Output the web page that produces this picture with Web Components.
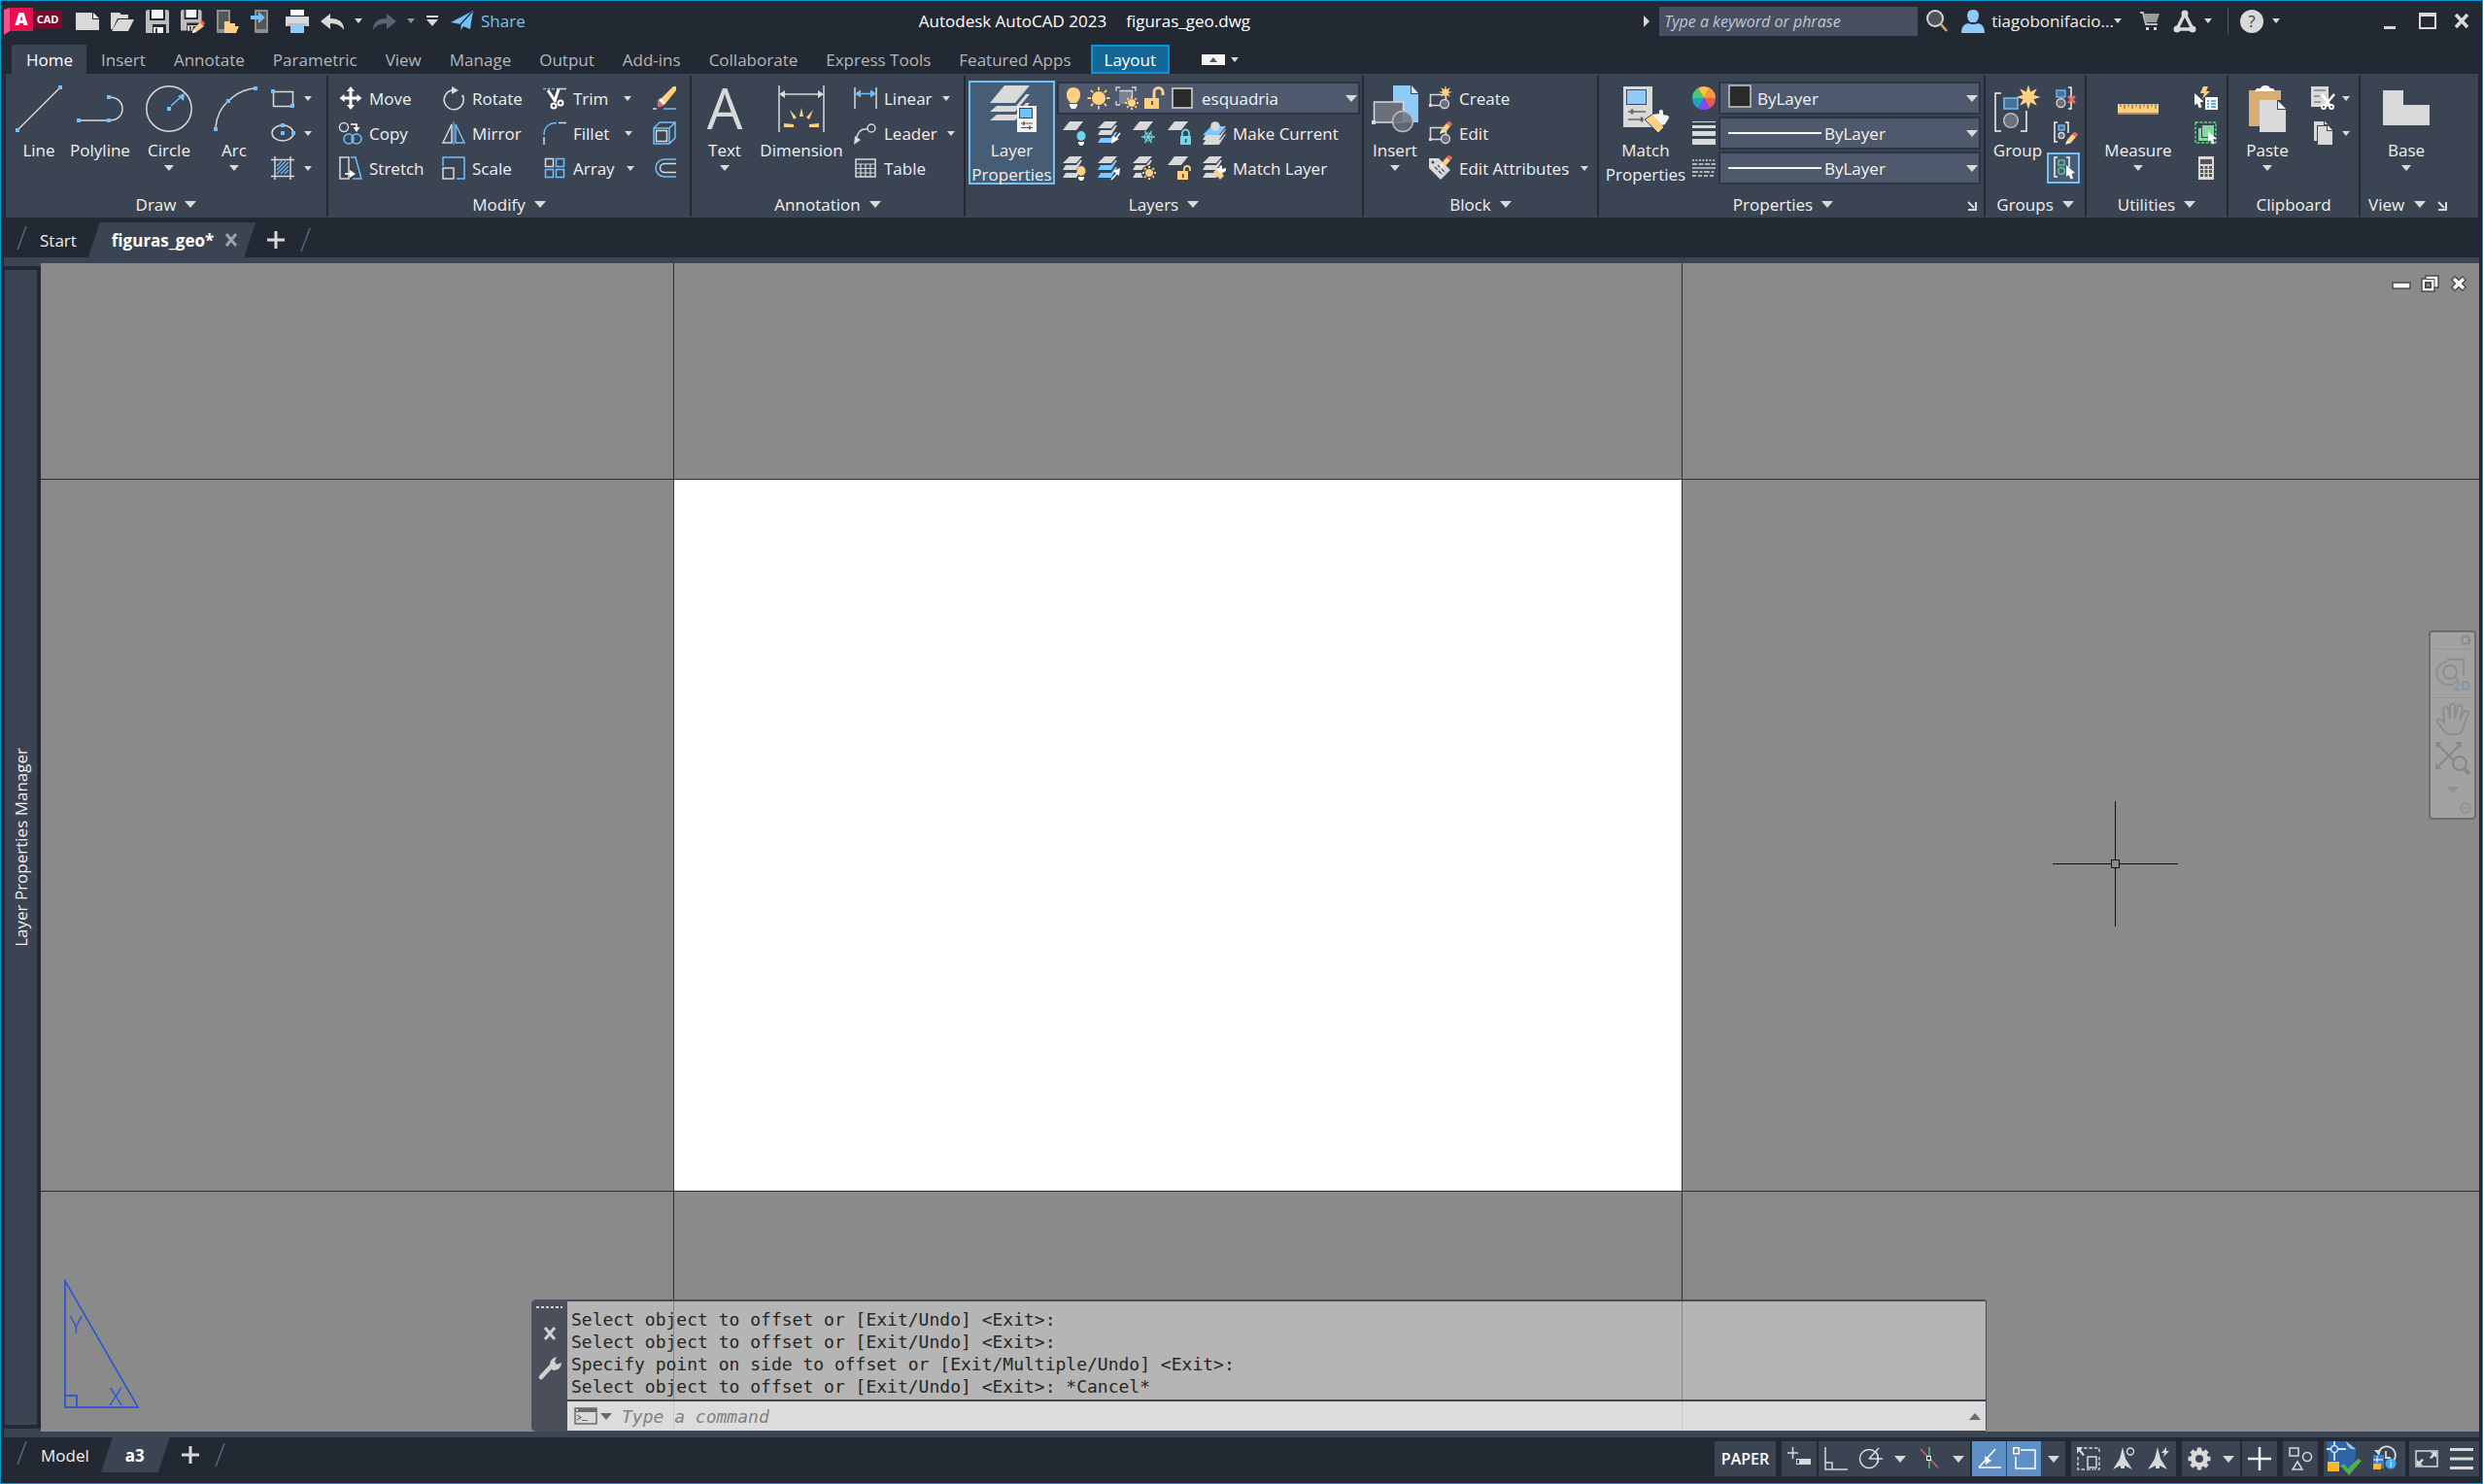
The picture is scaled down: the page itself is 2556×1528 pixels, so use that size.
<!DOCTYPE html>
<html lang="en">
<head>
<meta charset="utf-8">
<title>Autodesk AutoCAD 2023 - figuras_geo.dwg</title>
<style>
html,body{height:100%;margin:0;background:#222933}
body{font-family:"Open Sans","Noto Sans",sans-serif;font-size:17px;color:#f0f0f0}
</style>
</head>
<body>
<cad-app></cad-app>
<script>
const G='#d9d9d9',B='#6fc0fb',Y='#fed080',R='#f16464',D='#3b4453';
const sq=(x,y,s=4)=>`<rect x="${x-s/2}" y="${y-s/2}" width="${s}" height="${s}" fill="${B}"/>`;
const ln=(d,c=G,w=1.5,x='')=>`<path d="${d}" fill="none" stroke="${c}" stroke-width="${w}" ${x}/>`;
const fl=(d,c=G,x='')=>`<path d="${d}" fill="${c}" ${x}/>`;
const pencil=(x,y)=>`<g transform="translate(${x} ${y})">${fl('M0 13l2-5 3 3z','#fff')}${fl('M2 8l5-6 4 3-6 7z',Y)}${fl('M7 2l2-2q3 0 4 3l-2 2z',R)}</g>`;
const sheet=(y,c=G)=>fl(`M7 ${y}h14l-7 9H0z`,c);
const stack=(c2=G,c3=G)=>fl('M7 0h13l-6 7H0z')+fl('M14 9l4-5h2l-6 10H0l3-5z',c2)+fl('M14 17l4-6h2l-6 11H0l3-5z',c3);
const ray=(cx,cy,r1,r2,n,c,w)=>{let d='';for(let i=0;i<n;i++){const a=i*2*Math.PI/n;d+=`M${(cx+r1*Math.cos(a)).toFixed(1)} ${(cy+r1*Math.sin(a)).toFixed(1)}L${(cx+r2*Math.cos(a)).toFixed(1)} ${(cy+r2*Math.sin(a)).toFixed(1)}`}return ln(d,c,w)};
const star=(cx,cy,ro,ri,n,c)=>{let d='';for(let i=0;i<n*2;i++){const r=i%2?ri:ro,a=i*Math.PI/n-Math.PI/2;d+=(i?'L':'M')+(cx+r*Math.cos(a)).toFixed(1)+' '+(cy+r*Math.sin(a)).toFixed(1)}return fl(d+'z',c)};
const cursor=(x,y,s=1)=>`<path transform="translate(${x} ${y}) scale(${s})" d="M0 0v13l3-2 2 5 3-1-2-5 4-1z" fill="#fff"/>`;
const sunSmall=(x,y)=>ray(x,y,5,7,8,Y,2)+`<circle cx="${x}" cy="${y}" r="4" fill="${Y}"/>`;
const bulb=(x,y,c)=>`<ellipse cx="${x}" cy="${y}" rx="4.5" ry="5" fill="${c}"/>`+fl(`M${x-3} ${y+6}h6v2l-2 2h-2l-2-2z`,'#fff');
const floppy=fl('M3 0h1v11h16V0h1q3 0 3 2v22H21V15H7v9H0V2Q0 0 3 0z','#bdbdbd')+fl('M6 0h12v9H6z','#f4f4f4')+fl('M8 18h10v6H8z','#f4f4f4')+fl('M10 19h2v5h-2z',D);
const I={
down:[10,6,fl('M0 0h10L5 6z')],
downs:[8,5,fl('M0 0h8L4 5z')],
downl:[12,7,fl('M0 0h12L6 7z')],
launch:[10,10,ln('M1 1l6 6M9 1v8H1','#d9d9d9',2)],
logo:[60,28,fl('M0 2L6 0V24L0 28z','#f25287')+fl('M6 0h24v24H6z','#e51050')+fl('M30 3h30v18H30z','#7b0a2b')+`<text x="18" y="18" font-size="18" font-weight="800" fill="#fff" text-anchor="middle">A</text><text x="45" y="16" font-size="11" font-weight="700" fill="#fff" text-anchor="middle">CAD</text>`],
new:[24,24,fl('M0 3h17v7h7v11H0z')+fl('M18 3l6 6h-6z','#f4f4f4')],
open:[24,24,fl('M0 3h9l2 2h7v4H7L2 20H0z')+fl('M8 10h16l-6 12H1z')],
save:[24,24,floppy],
saveas:[24,24,`<g transform="scale(.9 .9)">${floppy}</g>`+fl('M13 17h11v7H11z','#222933')+fl('M12 24l1-4 7-7 4 4-8 6z',Y)+fl('M20 13l2-2 3 3-2 3z',R)+fl('M12 24l1-4 3 3z','#fff')],
openweb:[24,24,fl('M1 0h13q1 0 1 1v22q0 1-1 1H2q-1 0-1-1z','#8e8e8e')+fl('M3 2h10v18H3z','#555')+fl('M9 12h5l1 2h5v3h4l-3 7H9z',Y)],
saveweb:[24,24,fl('M5 0h12q1 0 1 1v22q0 1-1 1H5q-1 0-1-1V1q0-1 1-1z','#8e8e8e')+fl('M6 2h10v18H6z','#555')+fl('M0 6h8V2l7 6-7 6v-4H0z',B)],
print:[24,24,fl('M5 0h14v6H5z','#fff')+fl('M0 7h24v10h-4v-3H4v3H0z')+fl('M2 17h20v-3H2z','#bcbcbc')+fl('M5 16h14v8H5z','#8fcbfa')],
undo:[24,18,fl('M0 9L10 1v5q14 0 14 12-4-7-14-7v6z')],
redo:[24,18,fl('M24 9L14 1v5Q0 6 0 18q4-7 14-7v6z','#5b6470')],
cust:[12,12,fl('M0 0h12v2H0zM0 4h12l-6 7z')],
share:[24,22,fl('M0 12L23 0 20 19l-7-3-3 5v-7z',B)+ln('M22 1L10 14v7','#222933',1.2)],
play:[6,12,fl('M0 0l6 6-6 6z')],
mag:[24,24,`<circle cx="10" cy="9" r="8" fill="#4f545b" stroke="${G}" stroke-width="2"/>`+ln('M16 15l6 7','#d9a866',2.5)],
user:[24,24,fl('M12 0q6 0 6 6 0 4-3 7H9q-3-3-3-7 0-6 6-6z','#8fcbfa')+fl('M0 24q0-9 7-10 5 2 10 0 7 1 7 10z','#8fcbfa')],
cart:[20,20,ln('M0 1h3l3 12h12','#bdbdbd',2)+fl('M4 2h16l-3 9H6z','#9b9b9b')+fl('M6 16h3v3H6zM14 16h3v3h-3z')],
adsk:[24,24,ln('M12 4L4 20M12 4l8 16M4 20h16',G,3.5)+`<circle cx="12" cy="4" r="3.5" fill="${G}"/><circle cx="4" cy="20" r="3.5" fill="${G}"/><circle cx="20" cy="20" r="3.5" fill="${G}"/>`],
help:[24,24,`<circle cx="12" cy="12" r="12" fill="${G}"/><text x="12" y="18" font-size="17" text-anchor="middle" fill="#333b46">?</text>`],
min:[12,3,fl('M0 0h12v3H0z')],
max:[18,17,ln('M1 2h16v14H1z',G,2)+fl('M0 0h18v4H0z')],
close:[16,15,ln('M2 1l12 13M14 1L2 14',G,3.5)],
tabmin:[24,11,fl('M0 0h24v11H0z','#f4f4f4')+fl('M8 8l4-5 4 5z','#555')],
line:[48,48,ln('M2 46L46 2')+sq(2,46)+sq(46,2)],
pline:[48,48,ln('M2 36h31M33 12c9 0 14 5 14 12s-5 12-14 12')+sq(2,36)+sq(33,12)+sq(33,36)],
circle:[48,48,`<circle cx="24" cy="24" r="23.2" fill="none" stroke="${G}" stroke-width="1.5"/>`+sq(24,24)+ln('M26 21L35 13',B)+fl('M40 8l-1 8-6-5z',B)],
arc:[48,48,ln('M5 43C6 32 10 23 18 16C26 8 34 4 45 3')+sq(5,45)+sq(18,16)+sq(46,3)],
rect:[24,24,ln('M2.5 5.5h20v15h-20z')+sq(2,5)+sq(22,20)],
ellipse:[24,24,`<ellipse cx="12" cy="12" rx="11" ry="8" fill="none" stroke="${G}" stroke-width="1.5"/>`+sq(12,4)+sq(12,12)+sq(23,12)],
hatch:[24,24,ln('M0 3.5h24M0 20.5h24M4 0v24M20 0v24')+ln('M6 10l5-5M6 14l9-9M6 18L18 6M10 18l8-8M14 18l4-4',B,1.3)],
move:[24,24,fl('M12 0l4 5h-2.5v5.500h5V8l5 4-5 4v-2.500h-5v5.500H16l-4 5-4-5h2.500v-5.500h-5V16L.5 12l5-4v2.500h5V5H8z','#fff')],
rotate:[24,24,ln('M10 4A10 10 0 1 0 21 9')+ln('M22 11l-1-2',G,2)+fl('M10 0l7 4-7 4z')],
trim:[24,24,ln('M0 2.500h12',B,1.5,'stroke-dasharray="3 1.500"')+ln('M14 2.500h10')+ln('M5 4l8 12M16 3l-4 12','#fff',3)+`<circle cx="11" cy="20" r="2.500" fill="none" stroke="#fff" stroke-width="2"/><circle cx="18" cy="17" r="2.500" fill="none" stroke="#fff" stroke-width="2"/>`],
copy:[24,24,`<circle cx="5" cy="6" r="4.500" fill="none" stroke="${G}" stroke-width="1.500"/><circle cx="10" cy="18" r="5" fill="none" stroke="${B}" stroke-width="1.500"/><circle cx="18" cy="18" r="5" fill="none" stroke="${B}" stroke-width="1.500"/>`+ln('M12 3h6v4','#fff')+fl('M14.500 6h7L18 11z','#fff')],
mirror:[24,24,ln('M10 3v19H1z')+ln('M14 3v19h9z',B)+ln('M12 0v24',B,1)],
fillet:[24,24,ln('M1 24v-8')+ln('M1 14C1 6 6 1.500 14 1.500',B)+ln('M16 1.500h8')],
stretch:[24,24,ln('M1 1h9v22H1z')+ln('M12 1h5l6 22h-9',B)+ln('M6 18h7','#fff')+fl('M11 14l6 4-6 4z','#fff')],
scale:[24,24,ln('M1 10V1h22v22H15',B)+ln('M1 12h11v11H1z')],
array:[24,24,ln('M2.500 2.500h8v8h-8z')+ln('M13.500 2.500h8v8h-8zM2.500 13.500h8v8h-8zM13.500 13.500h8v8h-8z',B)],
erase:[24,24,fl('M21 0h3v4L12 19l-6-4z',Y)+fl('M8 12l5 5-3 3-5-5z','#fff')+fl('M6 14l5 5q-3 3-6 2-1-3 1-7z',R)+ln('M0 23h4')+ln('M11 23h13',B)],
box3:[24,24,ln('M1 7h16v16H1zM1 7L7 1h16v16l-6 6M17 7l6-6',B)+ln('M3.500 9.500h11v11h-11z')],
offset:[24,24,ln('M24 3H12a9 9 0 0 0 0 18h12',B)+ln('M24 7.500H12a4.500 4.500 0 0 0 0 9h12')],
text:[48,48,`<text x="24" y="45" font-size="58" text-anchor="middle" fill="${G}">A</text>`],
dim:[48,48,ln('M1 0v48M47 0v48M3 9h42')+fl('M1 9l6-4v8zM47 9l-6-4v8z')+fl('M22 32l2-9 2 9zM12 25l7 8-3 2zM36 25l-7 8 3 2zM6 39l10 1v3H6zM42 39l-10 1v3h10z',Y)],
linear:[24,24,ln('M1 1v22M23 1v22')+ln('M3 7.500h18',B)+fl('M1 7.500l6-4v8zM23 7.500l-6-4v8z',B)],
leader:[24,24,ln('M2 21Q4 8 11 8h3')+`<circle cx="18" cy="7" r="4" fill="none" stroke="${G}" stroke-width="1.500"/>`+fl('M0 24l1-9 6 4z')],
table:[24,24,ln('M2 3h20v18H2z')+ln('M2 8h20M2 12.500h20M2 17h20M7 8v13M12 8v13M17 8v13',G,1.2)],
layerprops:[48,48,fl('M16 0h26L27 18H1z')+fl('M8 21h20l10-12h4L27 27H1z')+fl('M8 30h20l10-12h4L27 36H1z')+fl('M29 21h20v27H29z','#f4f4f4')+fl('M31 23h14v11H31z','#36475e')+fl('M32 24h12v9H32z',B)+ln('M33 39h12M33 43.500h12','#555',1.2)+ln('M36 37v4M42 41.500v4','#555',1.5)],
bulb:[18,24,fl('M9 1q7 0 7 8 0 4-4 8H6Q2 13 2 9q0-8 7-8z',Y)+fl('M5 18h8v2l-2 3H7l-2-3z','#fff')],
sun:[24,24,ray(12,12,8,11.5,8,Y,1.8)+`<circle cx="12" cy="12" r="7" fill="${Y}"/>`],
vpf:[24,24,fl('M4 4h14v14H4z','#7c8290')+ln('M1 5V1h4M17 1h4v4M1 15v4h4M4.500 4.500h13v8',G,1.3)+sunSmall(17,17)],
unlock:[24,24,fl('M1 12h15v11H1z',Y)+ln('M11 12V6a4.500 4.500 0 0 1 9 0v3',Y,3)+fl('M8 15h2v4H8z','#6b5a3a')],
swatch:[22,22,`<rect x="1" y="1" width="20" height="20" fill="#2b2b2b" stroke="#d9d9d9" stroke-width="1.500"/>`],
swatchl:[24,24,`<rect x="1" y="1" width="22" height="22" fill="#2b2b2b" stroke="#c8c8c8" stroke-width="1.500"/>`],
l1:[24,24,sheet(0)+bulb(19,15,'#6fd8e6')],
l2:[24,24,stack(G,'#7cc7ff')+fl('M14 23l1-8 7 3z','#fff')+ln('M23 12l-7 9','#fff',1.5)],
l3:[24,24,sheet(0)+ray(16,16,0,7,6,'#6fd8e6',1.4)+`<circle cx="16" cy="16" r="4" fill="none" stroke="#6fd8e6" stroke-width="1.200"/>`],
l4:[24,24,sheet(0)+fl('M13 15h11v9H13z','#6fd8e6')+ln('M15 15v-3a3.500 3.500 0 0 1 7 0v3','#6fd8e6',1.8)+fl('M18 18h1.500v4H18z',D)],
l5:[24,24,fl('M9 5h15l-7 9H0z','#7cc7ff')+fl('M3 14h15l5-6h1l-7 11H0z')+fl('M3 19h15l5-6h1l-7 11H0z')+`<circle cx="13" cy="5" r="4.800" fill="${G}"/>`],
l6:[24,24,stack()+bulb(19,15,Y)],
l7:[24,24,stack('#7cc7ff','#7cc7ff')+ln('M14 24l8-9','#fff',1.5)+fl('M23 12l-1 8-6-5z','#fff')],
l8:[24,24,stack()+`<circle cx="17" cy="17" r="8" fill="${D}"/>`+sunSmall(17,17)],
l9:[24,24,sheet(0)+fl('M10 15h11v9H10z',Y)+ln('M17 15v-2a3 3 0 0 1 6 0v2',Y,1.8)+fl('M15 18h1.500v4H15z',D)],
l10:[24,24,stack()+fl('M11 16l5-4 6 8-4 4z',Y)+fl('M14 13l3-1 1-3 2 1v3l4-1v3l-5 3z','#fff')],
insert:[48,48,fl('M22 0h18v9h8v29H22z','#8fcbfa')+fl('M41 0l7 8h-7z','#cfe8ff')+`<rect x="2.500" y="17" width="30" height="21" fill="#6b707d" stroke="${G}" stroke-width="1.500"/><circle cx="32" cy="37" r="10.500" fill="#6b707dd0" stroke="#bdbdbd" stroke-width="1.500"/>`+fl('M0 36h4v4H0z')],
create:[24,24,ln('M1.500 8.500h16v11h-16z')+`<circle cx="16" cy="18" r="4.500" fill="#6b707d" stroke="${G}" stroke-width="1.300"/>`+fl('M0 18h3v3H0z')+star(17,6,7,3,8,Y)],
edit:[24,24,ln('M1.500 6.500h16v12h-16z')+`<circle cx="17" cy="18" r="4.500" fill="#6b707d" stroke="${G}" stroke-width="1.300"/>`+fl('M0 17h3v3H0z')+pencil(11,0)],
eattr:[24,24,fl('M0 2h10l12 12-10 10L0 12z')+`<circle cx="4" cy="6" r="1.500" fill="${D}"/>`+ln('M6 11l8 8M9 9l8 8',D,1.2,'stroke-dasharray="4 1.500"')+pencil(11,-1)],
match:[48,48,fl('M1 1h30v42H1z')+fl('M4 4h21v16H4z','#36475e')+fl('M5 5h19v14H5z','#8fcbfa')+ln('M6 27h18M6 35h16','#666',1.3)+ln('M10 24.500v5M20 32.500v5','#666',2.5)+`<path d="M23 35l9-6 11 14-6 6z" fill="${Y}" stroke="${D}"/>`+fl('M31 30l7-1v-3q3-3 4 1v3l5 1q2 2 0 4l-3 5-3 1z','#f4f4f4')],
wheel:[24,24,['#fe9441','#e85a5a','#7f4bf5','#18a8c8','#4cc578','#fec045'].map((c,i)=>{const a=(i*60-30)*Math.PI/180,b=a+Math.PI/3;return fl(`M12 12L${12+12*Math.cos(a-Math.PI/6)} ${12+12*Math.sin(a-Math.PI/6)}A12 12 0 0 1 ${12+12*Math.cos(b-Math.PI/6)} ${12+12*Math.sin(b-Math.PI/6)}z`,c)}).join('')],
lw:[24,24,fl('M0 0h24v1H0zM0 4h24v3H0zM0 10h24v5H0zM0 18h24v6H0z')],
lt:[24,24,ln('M0 4h24',G,1.3,'stroke-dasharray="2 1.500"')+ln('M0 8h24',G,1.3,'stroke-dasharray="5 1.500"')+ln('M0 12h24',G,1.3)+ln('M0 16h24',G,1.3,'stroke-dasharray="6 1.500 3 1.500"')+ln('M0 20h24',G,1.3,'stroke-dasharray="4 2"')],
group:[48,48,ln('M7 8H1v39h6M27 47h6V26','#f4f4f4')+`<rect x="10" y="13" width="14" height="11" fill="#4a7196" stroke="${B}" stroke-width="1.500"/><circle cx="17" cy="36" r="7.300" fill="#6b707d" stroke="#bdbdbd" stroke-width="1.500"/>`+star(35,12,12.500,6,8,Y)],
ungroup:[24,24,ln('M16 1h3v22h-3','#f4f4f4')+`<rect x="4" y="4" width="9" height="7" fill="#4a7196" stroke="${B}" stroke-width="1.300"/><circle cx="8.500" cy="17" r="4.500" fill="#6b707d" stroke="${G}" stroke-width="1.300"/>`+ln('M16 10l7 7M23 10l-7 7',R,2.500)],
gedit:[24,24,ln('M5 1H2v20h3M13 1h3v11','#f4f4f4')+`<rect x="6" y="4" width="6" height="5" fill="#4a7196" stroke="${B}" stroke-width="1.300"/><circle cx="9" cy="14.500" r="3" fill="#6b707d" stroke="${G}" stroke-width="1.300"/>`+pencil(13,11)],
gsel:[24,24,ln('M6 1H3v20h3M15 1h3v10','#f4f4f4')+`<rect x="7" y="4" width="6" height="5" fill="none" stroke="#5fd38a" stroke-width="1.300"/><circle cx="10" cy="15" r="3.300" fill="none" stroke="#5fd38a" stroke-width="1.300"/>`+cursor(15,9,.9)],
ruler:[48,48,fl('M3 19h42v10H3z',Y)+fl('M3 28h42v2H3z','#b58a4a')+ln('M6 19v3M10 19v5M14 19v3M18 19v5M22 19v3M26 19v5M30 19v3M34 19v5M38 19v3M42 19v5','#6b5a3a',1)],
qsel:[24,24,fl('M9 0h5l-2 5h4l-8 8 2-6H6z',Y)+fl('M11 11h13v13H11z','#fff')+ln('M13 15h2M13 18h2M13 21h2M17 15h5M17 18h5M17 21h5','#2f8fe0',1.3)+cursor(0,7,.95)],
selall:[24,24,ln('M1 1h21v21H1z','#5fd38a',1.400,'stroke-dasharray="3 1.500"')+fl('M4 7h3v10h10v3H4z','#7fd8a0')+fl('M8 4h12v12H8z','#7fd8a0')+cursor(14,10,.85)],
calc:[24,24,fl('M4 0h16v24H4z')+fl('M6 3h12v5H6zM6 10h3v3H6zM10.500 10h3v3h-3zM15 10h3v3h-3zM6 14h3v3H6zM10.500 14h3v3h-3zM15 14h3v3h-3zM6 18h3v3H6zM10.500 18h3v3h-3zM15 18h3v3h-3z','#555')],
paste:[48,48,fl('M5 5h33v10H16v27H5z','#d9ac73')+fl('M13 3h4q1-3 5-3t5 3h3l2 3H11z','#fff')+fl('M16 15h18v10h9v23H16z')+fl('M35 16l8 8h-8z','#f4f4f4')],
cut:[24,24,fl('M0 0h18v21H0z')+ln('M3 4h12M3 10h6M3 16h7','#555',1)+`<circle cx="13" cy="21" r="2" fill="${D}" stroke="#fff" stroke-width="1.800"/><circle cx="21" cy="21" r="2" fill="${D}" stroke="#fff" stroke-width="1.800"/>`+ln('M11 8l9 12M24 8l-10 12','#fff',2.500)],
clip:[24,24,fl('M3 0h10v4H6v16H3z')+fl('M7 5h9v5h6v14H7z')+fl('M17 4l5 5h-5z','#f4f4f4')+fl('M14 0l3 3h-3z','#f4f4f4')],
base:[48,48,fl('M0 5h21v15h27v21H0z')],
tx:[14,14,ln('M2 1l10 12M12 1L2 13','#9da3ab',3)],
plus:[18,18,ln('M9 0v18M0 9h18',G,3)],
slash:[12,24,ln('M1 24L10 0','#5c6675',1.5)],
wmin:[20,10,`<rect x="1" y="2" width="18" height="6" fill="#fff" stroke="#4b4b4b" stroke-width="1.500"/>`],
wres:[20,18,`<path d="M5 1h13v12h-4v4H1V4h4z" fill="#fff" stroke="#4b4b4b" stroke-width="1.500"/>`+ln('M5 4.500h9V13','#4b4b4b',1)+`<rect x="5" y="8" width="5" height="5" fill="#8a8a8a" stroke="#4b4b4b" stroke-width="2"/>`],
wclose:[18,18,ln('M3 3l12 12M15 3L3 15','#4b4b4b',6.500)+ln('M4 4l10 10M14 4L4 14','#fff',3.500)],
ucs:[80,136,ln('M2 1v130h75zM2 119h12v12','#1c4ee0',1.500)+`<text x="13" y="55" font-size="25" font-weight="300" fill="#1c4ee0" text-anchor="middle">Y</text><text x="54" y="129" font-size="25" font-weight="300" fill="#1c4ee0" text-anchor="middle">X</text>`],
cx:[14,14,ln('M2 1l10 12M12 1L2 13','#d0d0d0',3)],
wrench:[24,24,ln('M3 21L14 9','#d0d0d0',4.500,'stroke-linecap="round"')+fl('M12 8q0-6 7-8l-2 5 2 3 5-2q0 7-8 8-4-1-4-6z','#d0d0d0')],
prompt:[24,18,`<rect x="1" y="1" width="22" height="16" fill="#d8d8d8" stroke="#6b6b6b" stroke-width="1.500"/>`+fl('M1 1h22v4H1z','#6b6b6b')+fl('M2 2h2v1.500H2z','#fff')+ln('M3 8l4 2.500-4 2.500M8 13.500h6','#6b6b6b',1.2)],
cdown:[12,7,fl('M0 0h12L6 7z','#6b6b6b')],
cup:[12,7,fl('M0 7h12L6 0z','#6b6b6b')],
nclose:[12,12,`<circle cx="6" cy="6" r="5.500" fill="#8f8f8f"/>`+ln('M4 4l4 4M8 4l-4 4','#b0b0b0')],
nwheel:[36,36,ln('M12 2h17v16M19 28h-4A12 12 0 0 1 12 4','#8c8f8f',2)+`<circle cx="15" cy="15" r="7" fill="none" stroke="#8c8f8f" stroke-width="2"/>`+ln('M20 20l4 4','#8c8f8f',2)+`<text x="27" y="34" font-size="14" font-weight="700" text-anchor="middle" fill="#8795a3">2D</text>`],
nhand:[36,36,ln('M12 33Q6 27 1 19q3-4 8 2L8 6q3-3 5 1l2 10V3q3-3 5 0v14l3-13q3-2 5 1l-3 13 5-9q3-1 4 2l-5 14q-2 9-8 8z','#8a8d8d',1.800)],
nzoom:[36,36,ln('M3 4l22 22M25 4L3 26','#858888',2)+fl('M0 1h7l-6 6zM27 1h-7l6 6zM0 29v-7l6 7z','#858888')+`<circle cx="25" cy="23" r="7" fill="#a2a2a2" stroke="#858888" stroke-width="2"/>`+ln('M30 29l5 5','#858888',4)],
nmin:[12,12,`<circle cx="6" cy="6" r="5" fill="none" stroke="#8f8f8f" stroke-width="1.500"/>`+ln('M3 6h6','#8f8f8f')],
s1:[24,24,ln('M0 6h11M5.500 0v12',G,1.5)+fl('M9 12h15v6H9z')+fl('M10 13h2v4h-2z',D)],
s2:[24,24,ln('M1 0v23h23M1 16h7v7')],
s3:[24,24,`<circle cx="10" cy="12" r="9.500" fill="none" stroke="${G}" stroke-width="1.500"/>`+ln('M10 12L20 1M10 12h14M17 5q3 3 2 11')],
s4:[24,24,ln('M12 0v22','#4cc578',1.500)+ln('M3 2l18 19','#d9606d',1.500)+`<rect x="9.500" y="9.500" width="4" height="4" fill="${D}" stroke="#fff"/>`],
s5:[24,24,ln('M1 21h23M1 21L18 2','#fff')+fl('M7 9l7 5-6 4z','#fff')],
s6:[24,24,ln('M8 3h15v19H3V10','#fff')+ln('M0.800 0.800h5.500v6H.8z','#fff')],
s7:[24,24,ln('M7 1h16v5M23 10v13h-5M1 10v13h16','#d9d9d9',1.400,'stroke-dasharray="3.500 2"')+ln('M11 10h9v11h-9z')+fl('M0 0h6L4 3l4 5-2 1-4-5-2 3z')],
s8:[24,24,fl('M11 0l3 12 7 11-8-4v3h-4v-3l-8 4L8 12z')+`<circle cx="19" cy="4.500" r="3.500" fill="none" stroke="${G}" stroke-width="1.400"/>`],
s9:[24,24,fl('M11 0l3 12 7 11-8-4v3h-4v-3l-8 4L8 12z')+fl('M20 0l-5 6h3l-1 4 6-6h-3z')],
gear:[24,24,ray(12,12,7,11.500,8,G,4.500)+`<circle cx="12" cy="12" r="6.500" fill="none" stroke="${G}" stroke-width="5"/>`],
splus:[24,24,ln('M12 0v24M0 12h24','#f0f0f0',2.500)],
iso:[24,24,ln('M1 1h9v8H1zM4 23l5-8 5 8z')+`<circle cx="19" cy="10" r="4.500" fill="none" stroke="${G}" stroke-width="1.500"/>`],
dwg:[36,36,fl('M0 0h20l10 8q1 14-6 19H3z','#2f64a8')+fl('M20 0l10 8q-8 2-10-8z','#9fc4ec')+ln('M8 0v20M0 8h20','#cfe2f7',1.800)+`<circle cx="8" cy="8" r="3.500" fill="#2f64a8" stroke="#cfe2f7" stroke-width="1.500"/>`+fl('M1 21h12v10H1z','#fbb829')+fl('M14 25l4-2 4 5L32 18l4 2-13 15z','#4caf50')],
clock:[26,26,ln('M6 8A9 9 0 1 1 22 15M14 5v7h5','#d9d9d9',1.800)+fl('M2 4l7 0-2 6z')+fl('M1 9h11v14H1z','#3c7cc4')+fl('M1 18h8v6H1z','#fbb829')+ln('M5 10v7M1 14h10','#fff',1)+`<circle cx="19" cy="18" r="5.500" fill="#3fa9f5"/><text x="19" y="22" font-size="10" text-anchor="middle" fill="#fff">i</text>`],
full:[24,18,ln('M1 1h22v16H1z')+fl('M22 2v6l-2-2-3 3-2-1 3-4-2-2zM2 16v-6l2 2 3-3 2 1-3 4 2 2z')],
burger:[24,22,ln('M0 1.500h24M0 11h24M0 20.500h24',G,3)]
};
const BASE=`*,:host{box-sizing:border-box}button,select,input{font:inherit;color:inherit;background:none;border:0;padding:0;margin:0;border-radius:0;outline:0}a{color:inherit;text-decoration:none}`;
const ic=n=>`<cad-icon name="${n}"></cad-icon>`;
const def=(name,css,html)=>customElements.define(name,class extends HTMLElement{
  constructor(){super();this.attachShadow({mode:'open'})}
  connectedCallback(){const t=document.createElement('template');t.innerHTML=`<style>${BASE}${css}</style>${typeof html==='function'?html(this):html}`;this.shadowRoot.replaceChildren(t.content.cloneNode(true))}
});

def('cad-icon',`:host{display:inline-block;flex:none;line-height:0}svg{display:block;overflow:visible}`,e=>{const [w,h,b]=I[e.getAttribute('name')];return `<svg width="${w}" height="${h}" viewBox="0 0 ${w} ${h}" aria-hidden="true">${b}</svg>`});

/* title bar */
def('cad-titlebar',`:host{display:flex;align-items:center;height:45px;padding:0 13px 4px 3px}
.qa{display:flex;align-items:center}
.qa button{display:flex;justify-content:center;width:36px}
.qa button.n{width:18px}
.logo{display:flex;margin-right:8px}
.share{display:flex;align-items:center;gap:7px;color:#7bc3f7;margin-left:6px}
.qa .share{width:auto}
h1{flex:1;display:flex;justify-content:center;gap:20px;font-size:17px;font-weight:400;margin:0;color:#fff}
.r{display:flex;align-items:center}
.r button{display:flex;align-items:center;justify-content:center}
input{width:266px;height:30px;background:#474f61;padding:0 5px;font-style:italic;font-size:16px;margin:0 8px 0 10px}
input::placeholder{color:#c4c7ce;opacity:1}
.user{gap:7px;margin-left:13px}
.user span{display:flex;align-items:center}
.div{width:1px;height:27px;background:#4e5a73;margin:0 12px 0 16px}
`,`<div class="qa"><a class="logo" href="#" aria-label="AutoCAD">${ic('logo')}</a>
${['new','open','save','saveas','openweb','saveweb','print','undo'].map(n=>`<button aria-label="${n}">${ic(n)}</button>`).join('')}<button class="n" aria-label="undo list">${ic('downs')}</button><button aria-label="redo">${ic('redo')}</button><button class="n" aria-label="redo list" style="opacity:.6">${ic('downs')}</button><button class="n" aria-label="customize" style="width:26px">${ic('cust')}</button><button class="share">${ic('share')}Share</button></div>
<h1><span>Autodesk AutoCAD 2023</span><span>figuras_geo.dwg</span></h1>
<div class="r"><button aria-label="collapse search">${ic('play')}</button><input type="text" aria-label="Search" placeholder="Type a keyword or phrase"><button aria-label="search">${ic('mag')}</button><button class="user">${ic('user')}<span>tiagobonifacio...${ic('downs')}</span></button>
<button aria-label="cart" style="margin-left:19px">${ic('cart')}</button><button aria-label="apps" style="gap:8px;margin-left:14px">${ic('adsk')}${ic('downs')}</button><i class="div"></i><button aria-label="help" style="gap:9px">${ic('help')}${ic('downs')}</button>
<button aria-label="minimize" style="margin:13px 0 0 107px">${ic('min')}</button><button aria-label="maximize" style="margin-left:24px">${ic('max')}</button><button aria-label="close" style="margin-left:18px">${ic('close')}</button></div>`);

/* ribbon tab strip */
def('ribbon-tabs',`:host{display:flex;height:30px;padding-left:11px;color:#b4b7bc}
a{display:flex;align-items:center;padding:0 14px 0 15px}
a.on{background:#3b4453;color:#fff}
a.lay{margin-left:6px;background:#146796;color:#fff;border:2px solid #0696d7;padding:0 12px}
.m{display:flex;align-items:center;gap:6px;margin-left:33px}`,
`${['Home','Insert','Annotate','Parametric','View','Manage','Output','Add-ins','Collaborate','Express Tools','Featured Apps'].map((t,i)=>`<a href="#"${i?'':' class="on"'}>${t}</a>`).join('')}<a href="#" class="lay">Layout</a><button class="m" aria-label="ribbon display">${ic('tabmin')}${ic('downs')}</button>`);

/* ribbon parts */
def('ribbon-panel',`:host{display:block;flex:none;padding:2px 0 1px;background:#3b4453}
.in{display:flex;flex-direction:column;height:145px;padding-top:5px;border-right:2px solid #222933}
:host([last]){flex:1}:host([last]) .in{border:0}
.c{display:flex;height:108px}
.t{display:flex;align-items:center;justify-content:center;gap:9px;height:26px;margin-top:6px;width:100%}
:host([last]) .t{justify-content:flex-start;padding-left:8px;gap:10px}
.w{display:flex;align-items:center}.w>.t{flex:1;width:auto}
.l{margin:7px 7px 0 0}:host([last]) .w>.t{flex:none}:host([last]) .l{margin-left:12px}`,
e=>`<div class="in"><div class="c"><slot></slot></div><div class="w"><button class="t">${e.getAttribute('label')}${e.hasAttribute('flat')?'':ic('downl')}</button>${e.hasAttribute('launcher')?`<button class="l" aria-label="dialog">${ic('launch')}</button>`:''}</div></div>`);
def('ribbon-big',`:host{display:block;flex:none}
button{display:flex;flex-direction:column;align-items:center;width:100%;height:107px;padding-top:5px;line-height:25px;white-space:nowrap}
:host([on]) button{background:#475c75;box-shadow:inset 0 0 0 2px #6fc0fb}
.l{margin-top:6px;white-space:pre-line;text-align:center}.a{margin-top:3px}`,
e=>`<button>${ic(e.getAttribute('icon'))}<span class="l">${e.getAttribute('label').replace('|','\n')}</span>${e.hasAttribute('menu')?`<cad-icon class="a" name="down"></cad-icon>`:''}</button>`);
def('ribbon-item',`:host{display:flex;align-items:center;height:36px}
button{display:flex;align-items:center;gap:7px;white-space:nowrap}
.a{margin-left:var(--gap,12px)}
:host([on]) button{background:#475c75;box-shadow:inset 0 0 0 2px #6fc0fb;width:34px;height:32px;justify-content:center;margin-left:-6px}`,
e=>`<button aria-label="${e.getAttribute('label')||e.getAttribute('icon')}">${ic(e.getAttribute('icon'))}${e.getAttribute('label')?`<span>${e.getAttribute('label')}</span>`:''}</button>${e.hasAttribute('menu')?`<button class="a" aria-label="menu">${ic('downs')}</button>`:''}`);
def('ribbon-col',`:host{display:flex;flex-direction:column;flex:none}`,`<slot></slot>`);
def('ribbon-row',`:host{display:flex;align-items:center;height:36px;gap:12px;flex:none}`,`<slot></slot>`);
def('ribbon-combo',`:host{display:flex;align-items:center;height:34px;margin-bottom:2px;background:#4e596d;border:2px solid #2d3542;padding:0 1px 0 8px;flex:none}
.line{width:96px;height:2px;background:#f4f4f4;margin-right:3px;flex:none}
select{appearance:none;flex:1;min-width:0;height:28px;color:#f4f4f4}option{color:#222}
slot{display:contents}`,
e=>`<slot></slot>${e.hasAttribute('line')?'<i class="line"></i>':''}<select aria-label="${e.getAttribute('label')}"><option>${e.getAttribute('value')}</option></select>${ic('downl')}`);

const item=(i,l,m,g)=>`<ribbon-item icon="${i}"${l?` label="${l}"`:''}${m?' menu':''}${g?` style="--gap:${g}px"`:''}></ribbon-item>`;
const big=(i,l,w,m,x='')=>`<ribbon-big icon="${i}" label="${l}"${m?' menu':''} ${x} style="width:${w}px"></ribbon-big>`;
def('cad-ribbon',`:host{display:flex;height:148px;margin:0 4px 0 5px}`,`
<ribbon-panel label="Draw" style="width:332px"><div style="width:6px"></div>${big('line','Line',56)}${big('pline','Polyline',70)}${big('circle','Circle',72,1)}${big('arc','Arc',62,1)}
<ribbon-col style="margin-left:7px">${item('rect','',1,10)}${item('ellipse','',1,10)}${item('hatch','',1,10)}</ribbon-col></ribbon-panel>
<ribbon-panel label="Modify" style="width:374px"><ribbon-col style="margin-left:11px;width:106px">${item('move','Move')}${item('copy','Copy')}${item('stretch','Stretch')}</ribbon-col>
<ribbon-col style="width:104px">${item('rotate','Rotate')}${item('mirror','Mirror')}${item('scale','Scale')}</ribbon-col>
<ribbon-col style="width:113px">${item('trim','Trim',1,16)}${item('fillet','Fillet',1,16)}${item('array','Array',1,12)}</ribbon-col>
<ribbon-col>${item('erase')}${item('box3')}${item('offset')}</ribbon-col></ribbon-panel>
<ribbon-panel label="Annotation" style="width:282px"><div style="width:4px"></div>${big('text','Text',60,1)}${big('dim','Dimension',98)}
<ribbon-col style="margin-left:5px">${item('linear','Linear',1,10)}${item('leader','Leader',1,10)}${item('table','Table')}</ribbon-col></ribbon-panel>
<ribbon-panel label="Layers" style="width:410px"><div style="width:3px"></div>${big('layerprops','Layer|Properties',89,0,'on')}
<ribbon-col style="margin-left:2px;width:312px"><ribbon-combo label="Layer" value="esquadria" style="margin-top:1px;margin-bottom:1px;padding-left:6px"><span style="display:flex;align-items:center;gap:5px;margin-right:9px">${ic('bulb')}${ic('sun')}${ic('vpf')}${ic('unlock')}${ic('swatch')}</span></ribbon-combo>
<ribbon-row style="padding-left:6px">${['l1','l2','l3','l4'].map(n=>item(n)).join('')}${item('l5','Make Current')}</ribbon-row>
<ribbon-row style="padding-left:6px">${['l6','l7','l8','l9'].map(n=>item(n)).join('')}${item('l10','Match Layer')}</ribbon-row></ribbon-col></ribbon-panel>
<ribbon-panel label="Block" style="width:242px">${big('insert','Insert',64,1)}<ribbon-col style="margin-left:3px">${item('create','Create')}${item('edit','Edit')}${item('eattr','Edit Attributes',1)}</ribbon-col></ribbon-panel>
<ribbon-panel label="Properties" launcher style="width:398px">${big('match','Match|Properties',96)}<ribbon-col>${item('wheel')}${item('lw')}${item('lt')}</ribbon-col>
<ribbon-col style="margin-left:3px;width:270px;padding-top:1px"><ribbon-combo label="Object color" value="ByLayer"><span style="margin-right:6px">${ic('swatchl')}</span></ribbon-combo><ribbon-combo label="Lineweight" line value="ByLayer"></ribbon-combo><ribbon-combo label="Linetype" line value="ByLayer"></ribbon-combo></ribbon-col></ribbon-panel>
<ribbon-panel label="Groups" style="width:104px">${big('group','Group',66)}<ribbon-col style="margin-left:3px">${item('ungroup')}${item('gedit')}<ribbon-item icon="gsel" on></ribbon-item></ribbon-col></ribbon-panel>
<ribbon-panel label="Utilities" style="width:146px">${big('ruler','Measure',106,1)}<ribbon-col style="margin-left:5px">${item('qsel')}${item('selall')}${item('calc')}</ribbon-col></ribbon-panel>
<ribbon-panel label="Clipboard" flat style="width:136px">${big('paste','Paste',80,1)}<ribbon-col style="margin-left:5px">${item('cut','',1,8)}${item('clip','',1,8)}</ribbon-col></ribbon-panel>
<ribbon-panel label="View" launcher last>${big('base','Base',94,1)}</ribbon-panel>`);

/* document tabs and layout tabs share one element */
def('doc-tabs',`:host{display:flex;align-items:center;height:36px}
a{display:flex;align-items:center;height:36px}
.on{font-weight:700;color:#fff;background:#3b4453;clip-path:polygon(12px 0,100% 0,calc(100% - 12px) 100%,0 100%)}
button{display:flex}`,
e=>{const f=e.hasAttribute('file');return `<span style="margin-left:16px">${ic('slash')}</span><a href="#" style="margin:0 12px 0 ${f?12:13}px">${e.getAttribute('first')}</a><a href="#" class="on" style="padding:0 ${f?'18px 0 24px':'26px 0 25px'}">${e.getAttribute('current')}${f?`<span style="margin-left:11px">${ic('tx')}</span>`:''}</a><button aria-label="new" style="margin:0 16px 0 12px">${ic('plus')}</button>${ic('slash')}`});

/* palette strip docked at the left */
def('side-palette',`:host{display:flex;flex-direction:column;width:38px;flex:none;background:#222933}
.cap{height:3px;background:#3b4453}.end{height:3px;background:#3b4453}
.p{flex:1;display:flex;align-items:center;justify-content:center;margin:4px 4px 4px 1px;background:#3b4453}
span{writing-mode:vertical-rl;transform:rotate(180deg);line-height:24px}`,
`<div class="cap"></div><div class="p"><span>Layer Properties Manager</span></div><div class="end"></div>`);

def('nav-bar',`:host{display:flex;flex-direction:column;align-items:center;background:#a2a2a2;border:2px solid #6c6c6c;border-radius:4px;width:49px;height:195px;padding:2px 5px}
.e{align-self:flex-end;margin-right:-2px}.s{width:40px;height:1px;background:#969696;margin:3px 0 8px}
button{display:flex;flex:none}`,
`<button class="e" aria-label="close">${ic('nclose')}</button><i class="s"></i><button aria-label="wheel">${ic('nwheel')}</button><i class="s" style="margin:5px 0 4px"></i><button aria-label="pan">${ic('nhand')}</button><button aria-label="zoom" style="margin-top:4px">${ic('nzoom')}</button><button aria-label="more" style="margin:11px 0 9px;opacity:.3">${ic('cdown')}</button><button class="e" aria-label="options">${ic('nmin')}</button>`);

def('command-line',`:host{display:flex;height:136px;border-radius:5px 0 0 5px;overflow:hidden;font-family:"DejaVu Sans Mono","Liberation Mono",monospace;font-size:18px;color:#262626}
.g{width:37px;background:#4a4f59;display:flex;flex-direction:column;align-items:center}
.d{width:27px;height:2px;margin:7px 0 19px;background:repeating-linear-gradient(90deg,#d0d0d0 0 3px,transparent 3px 5px)}
.g button{display:flex;margin-bottom:17px}
.m{flex:1;display:flex;flex-direction:column;border:1px solid #454b57;border-left:0;border-top-width:2px;border-radius:0 3px 3px 0}
.h{flex:1;background:rgba(226,226,226,.49);padding:7px 4px 0;line-height:23px;white-space:pre}
.i{height:32px;border-top:2px solid #414855;display:flex;align-items:center;background:rgba(243,243,243,.78);padding:0 5px 0 7px}
.i button{display:flex;align-items:center;gap:3px}
input{flex:1;font-style:italic;margin-left:10px}input::placeholder{color:#808080;opacity:1}`,
`<div class="g"><i class="d"></i><button aria-label="close">${ic('cx')}</button><button aria-label="customize">${ic('wrench')}</button></div>
<div class="m"><div class="h">Select object to offset or [Exit/Undo] &lt;Exit&gt;:
Select object to offset or [Exit/Undo] &lt;Exit&gt;:
Specify point on side to offset or [Exit/Multiple/Undo] &lt;Exit&gt;:
Select object to offset or [Exit/Undo] &lt;Exit&gt;: *Cancel*</div>
<div class="i"><button aria-label="recent commands">${ic('prompt')}${ic('cdown')}</button><input type="text" aria-label="Command" placeholder="Type a command"><button aria-label="history">${ic('cup')}</button></div></div>`);

/* free drawing canvas: sheet, guides, cursor and floating tools */
def('drawing-area',`:host{display:block;position:relative;flex:1;background:#8a8a8a;overflow:hidden}
:host>*{position:absolute}
.paper,.v,.h,.wc,.cur,.ucs,nav-bar,command-line{position:absolute}
.paper{left:652px;top:222px;width:1038px;height:734px;background:#fff}
.v{width:1px;top:0;bottom:0;background:#303030}.h{height:1px;left:0;right:0;background:#303030}
.wc{display:flex;align-items:center;gap:10px;right:12px;top:12px}
.wc button{display:flex}
.cur{left:2071px;top:554px}.ucs{left:23px;top:1047px}
nav-bar{right:3px;top:378px}
command-line{left:505px;right:507px;bottom:0}`,
`<div class="paper"></div><i class="v" style="left:651px"></i><i class="v" style="left:1689px"></i><i class="h" style="top:222px"></i><i class="h" style="top:955px"></i>
<div class="wc"><button aria-label="minimize" style="margin-top:4px">${ic('wmin')}</button><button aria-label="restore">${ic('wres')}</button><button aria-label="close">${ic('wclose')}</button></div>
<svg class="cur" width="129" height="129" fill="none" stroke="#111" aria-hidden="true"><path d="M0 64.500h60M69 64.500h60M64.500 0v60M64.500 69v60M60.500 60.500h8v8h-8z"/></svg>
<span class="ucs">${ic('ucs')}</span><nav-bar></nav-bar><command-line></command-line>`);

def('status-bar',`:host{display:flex;height:36px}
div{display:flex;background:#3b4453;margin-left:6px}
div.t{margin-left:2px}
button{display:flex;align-items:center;justify-content:center;width:36px;height:36px}
.a{width:24px}.on{background:#5f8fc4;width:35px;margin-right:1px}.w{width:42px}
.p{width:63px;font-weight:600;font-size:16px;color:#fff}`,
`<div><button class="p">PAPER</button></div><div>${b('s1')}</div><div class="t">${b('s2')}${b('s3')}${b('downl','a')}${b('s4')}${b('downl','a')}</div><div class="t">${b('s5','on')}${b('s6','on')}${b('downl','a')}</div><div>${b('s7')}${b('s8')}${b('s9')}</div><div>${b('gear')}${b('downl','a')}</div><div class="t">${b('splus')}</div><div>${b('iso')}</div><div>${b('dwg','w')}${b('clock','w')}</div><div style="margin-left:4px">${b('full')}${b('burger')}</div>`);
function b(n,c=''){return `<button class="${c}" aria-label="${n}">${ic(n)}</button>`}

def('cad-app',`:host{display:flex;flex-direction:column;height:100vh;background:#222933;border:1px solid #0696d7}
.tabs{padding:5px 0 0;height:41px}
.bar{height:6px;background:#3b4453;margin:0 3px;flex:none}
main{flex:1;display:flex;min-height:0;margin:0 3px}
footer{display:flex;justify-content:space-between;height:47px;flex:none;padding-right:3px}
status-bar{margin-top:4px}`,
`<cad-titlebar></cad-titlebar><ribbon-tabs></ribbon-tabs><cad-ribbon></cad-ribbon><div class="tabs"><doc-tabs file first="Start" current="figuras_geo*"></doc-tabs></div><div class="bar"></div><main><side-palette></side-palette><drawing-area></drawing-area></main><div class="bar"></div><footer><doc-tabs first="Model" current="a3"></doc-tabs><status-bar></status-bar></footer>`);
</script>
</body>
</html>
